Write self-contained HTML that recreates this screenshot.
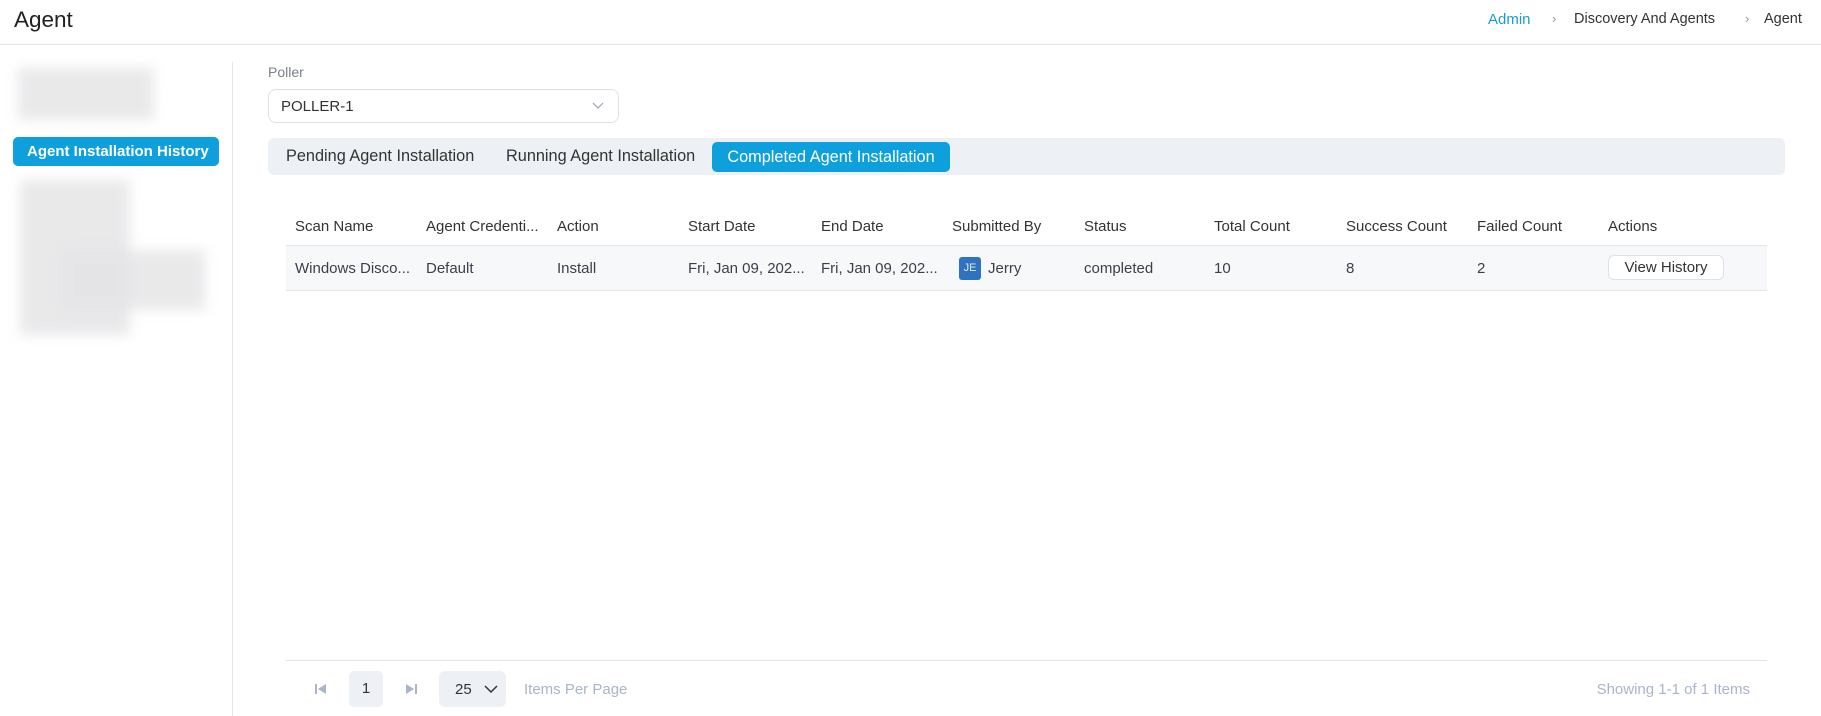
<!DOCTYPE html>
<html><head><meta charset="utf-8"><style>
*{box-sizing:border-box;margin:0;padding:0}
body{width:1821px;height:716px;background:#fff;font-family:"Liberation Sans",sans-serif;color:#3a3f4a;position:relative;overflow:hidden;font-size:14px}
.a{position:absolute;white-space:nowrap}
.blur{position:absolute;background:#e4e4e6;filter:blur(6px);opacity:.8}
.th{position:absolute;top:218px;font-size:15px;color:#333}
.td{position:absolute;top:260px;font-size:15px;color:#3a3f4a}
</style></head><body>
<div class="a" style="left:14px;top:7px;font-size:22.5px;color:#222">Agent</div>
<div class="a" style="left:1488px;top:11px;font-size:15px;color:#1a9ad6">Admin</div>
<div class="a" style="left:1552px;top:11px;font-size:13px;color:#999">›</div>
<div class="a" style="left:1574px;top:11px;font-size:14.5px;color:#333">Discovery And Agents</div>
<div class="a" style="left:1745px;top:11px;font-size:13px;color:#999">›</div>
<div class="a" style="left:1764px;top:11px;font-size:14.5px;color:#333">Agent</div>
<div class="a" style="left:0;top:44px;width:1821px;height:1px;background:#dfe3ea"></div>

<div class="blur" style="left:18px;top:68px;width:136px;height:52px"></div>
<div class="a" style="left:13px;top:137px;width:206px;height:29px;background:#0ea0dc;border-radius:5px;color:#fff;font-size:15px;font-weight:bold;line-height:29px;padding-left:14px">Agent Installation History</div>
<div class="blur" style="left:20px;top:180px;width:110px;height:155px"></div>
<div class="blur" style="left:60px;top:250px;width:145px;height:60px"></div>
<div class="a" style="left:232px;top:62px;width:1px;height:654px;background:#e4e7ec"></div>

<div class="a" style="left:268px;top:64px;font-size:14px;color:#7a808a">Poller</div>
<div class="a" style="left:268px;top:89px;width:351px;height:34px;border:1px solid #dde1e8;border-radius:8px"></div>
<div class="a" style="left:281px;top:98px;font-size:15px;color:#333">POLLER-1</div>
<svg class="a" style="left:592px;top:102px" width="12" height="8"><path d="M1 1l5 5 5-5" stroke="#9aa3b0" fill="none" stroke-width="1.2"/></svg>

<div class="a" style="left:268px;top:138px;width:1517px;height:37px;background:#edf0f5;border-radius:6px"></div>
<div class="a" style="left:286px;top:147px;font-size:16.3px;color:#333">Pending Agent Installation</div>
<div class="a" style="left:506px;top:147px;font-size:16.3px;color:#333">Running Agent Installation</div>
<div class="a" style="left:712px;top:142px;width:238px;height:30px;background:#0ea0dc;border-radius:5px;color:#fff;font-size:16.3px;line-height:30px;text-align:center">Completed Agent Installation</div>

<div class="th" style="left:295px">Scan Name</div>
<div class="th" style="left:426px">Agent Credenti...</div>
<div class="th" style="left:557px">Action</div>
<div class="th" style="left:688px">Start Date</div>
<div class="th" style="left:821px">End Date</div>
<div class="th" style="left:952px">Submitted By</div>
<div class="th" style="left:1084px">Status</div>
<div class="th" style="left:1214px">Total Count</div>
<div class="th" style="left:1346px">Success Count</div>
<div class="th" style="left:1477px">Failed Count</div>
<div class="th" style="left:1608px">Actions</div>
<div class="a" style="left:286px;top:245px;width:1481px;height:46px;background:#f7f8fa;border-top:1px solid #e1e5ec;border-bottom:1px solid #e1e5ec"></div>
<div class="td" style="left:295px">Windows Disco...</div>
<div class="td" style="left:426px">Default</div>
<div class="td" style="left:557px">Install</div>
<div class="td" style="left:688px">Fri, Jan 09, 202...</div>
<div class="td" style="left:821px">Fri, Jan 09, 202...</div>
<div class="a" style="left:959px;top:257px;width:22px;height:23px;background:#2f73c0;border-radius:3px;color:#dfe9f7;font-size:11px;line-height:23px;text-align:center">JE</div>
<div class="td" style="left:988px">Jerry</div>
<div class="td" style="left:1084px">completed</div>
<div class="td" style="left:1214px">10</div>
<div class="td" style="left:1346px">8</div>
<div class="td" style="left:1477px">2</div>
<div class="a" style="left:1608px;top:255px;width:116px;height:25px;background:#fff;border:1px solid #dde1e8;border-radius:6px;font-size:15px;line-height:23px;text-align:center;color:#333">View History</div>

<div class="a" style="left:286px;top:660px;width:1481px;height:1px;background:#dfe3ea"></div>
<svg class="a" style="left:315px;top:683px" width="12" height="12"><rect x="0" y="1" width="2" height="10" fill="#a9b6c9"/><path d="M11 1L3 6l8 5z" fill="#a9b6c9"/></svg>
<div class="a" style="left:349px;top:671px;width:34px;height:36px;background:#edf0f5;border-radius:5px;text-align:center;line-height:36px;font-size:15px;color:#333">1</div>
<svg class="a" style="left:405px;top:683px" width="12" height="12"><path d="M1 1l8 5-8 5z" fill="#a9b6c9"/><rect x="10" y="1" width="2" height="10" fill="#a9b6c9"/></svg>
<div class="a" style="left:439px;top:671px;width:67px;height:36px;background:#edf0f5;border-radius:6px"></div>
<div class="a" style="left:455px;top:681px;font-size:15px;color:#333">25</div>
<svg class="a" style="left:484px;top:685px" width="14" height="9"><path d="M1 1l6 6 6-6" stroke="#333" fill="none" stroke-width="1.5"/></svg>
<div class="a" style="left:524px;top:681px;font-size:15px;color:#a9b6c9">Items Per Page</div>
<div class="a" style="right:71px;top:681px;font-size:15px;color:#a9b6c9">Showing 1-1 of 1 Items</div>
</body></html>
